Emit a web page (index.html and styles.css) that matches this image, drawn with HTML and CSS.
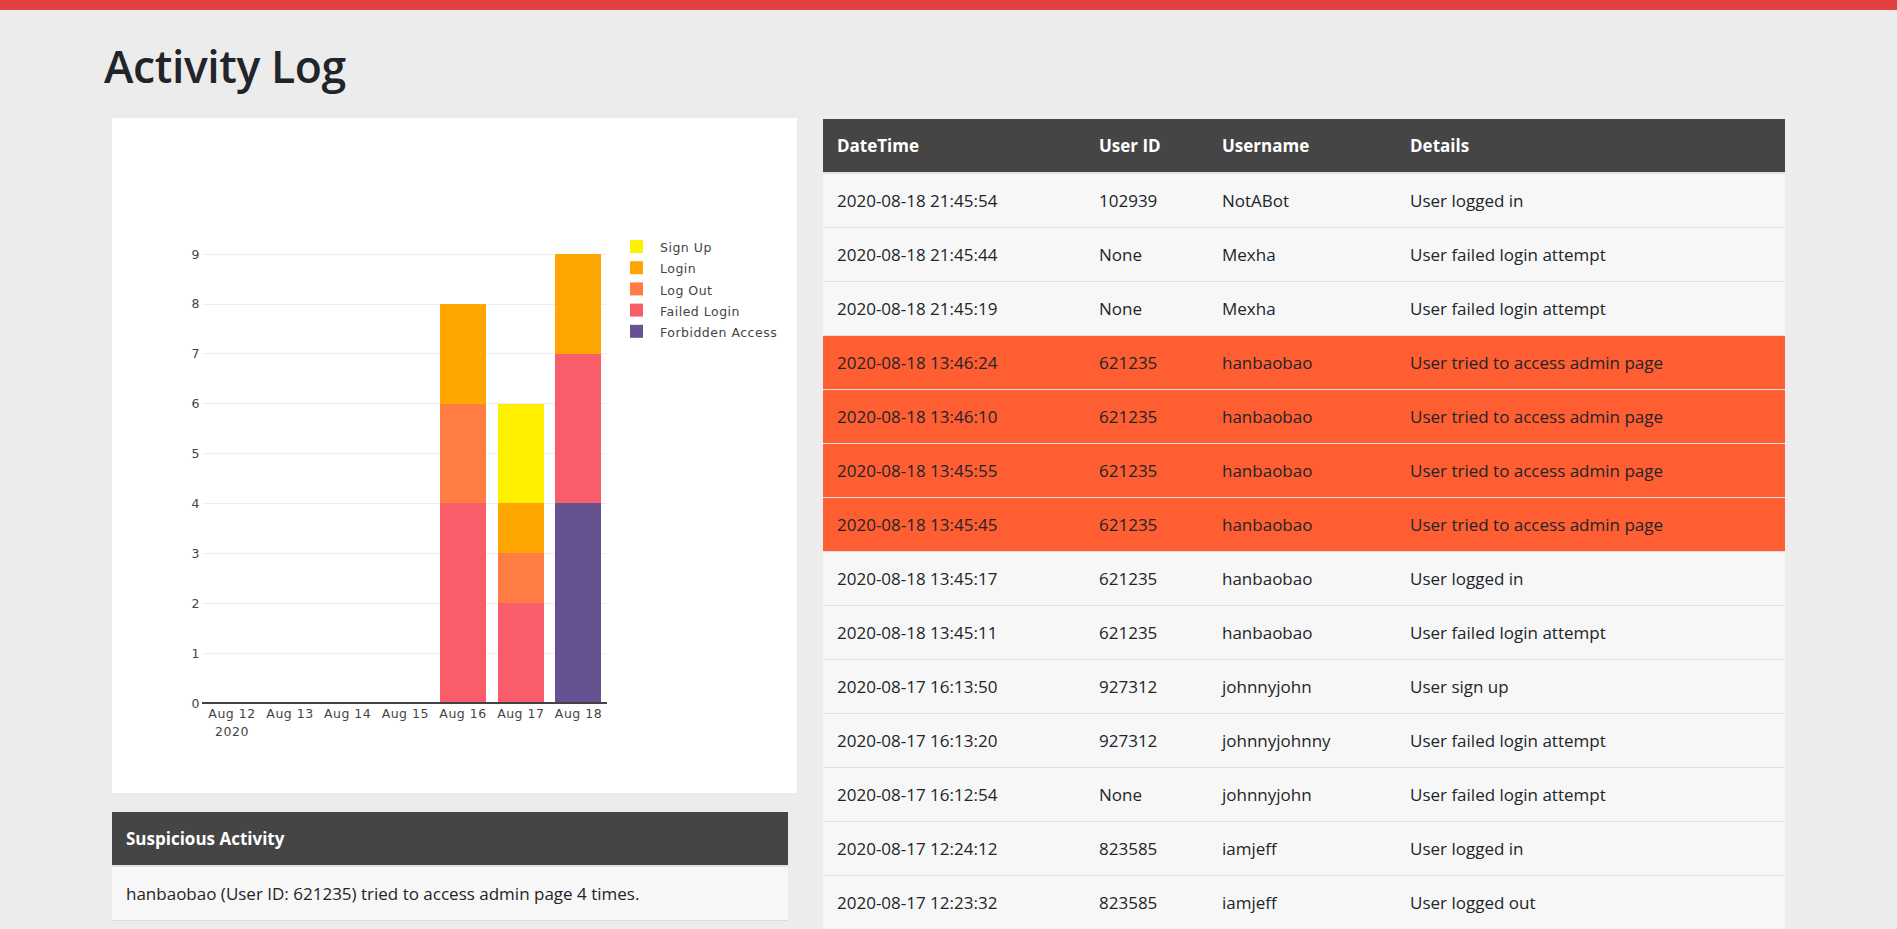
FILE: index.html
```html
<!DOCTYPE html>
<html lang="en">
<head>
<meta charset="utf-8">
<title>Activity Log</title>
<link rel="stylesheet" href="styles.css">
</head>
<body>
<div class="topbar"></div>
<main class="page">
  <h1 class="title">Activity Log</h1>
  <div class="content">
    <section class="left-col">
      <div class="chart-card">
        <svg class="chart" width="685" height="675" viewBox="0 0 685 675" xmlns="http://www.w3.org/2000/svg">
          <g class="grid" stroke="#eeeeee" stroke-width="1" shape-rendering="crispEdges">
            <line x1="91" x2="495" y1="535.5" y2="535.5"/>
            <line x1="91" x2="495" y1="485.5" y2="485.5"/>
            <line x1="91" x2="495" y1="435.5" y2="435.5"/>
            <line x1="91" x2="495" y1="385.5" y2="385.5"/>
            <line x1="91" x2="495" y1="335.5" y2="335.5"/>
            <line x1="91" x2="495" y1="285.5" y2="285.5"/>
            <line x1="91" x2="495" y1="235.5" y2="235.5"/>
            <line x1="91" x2="495" y1="186.5" y2="186.5"/>
            <line x1="91" x2="495" y1="136.5" y2="136.5"/>
          </g>
          <g class="bars" shape-rendering="crispEdges">
            <rect x="328" y="385.44" width="46" height="199.56" fill="#f95d6a"/>
            <rect x="328" y="285.67" width="46" height="99.77" fill="#ff7c43"/>
            <rect x="328" y="185.89" width="46" height="99.78" fill="#ffa600"/>
            <rect x="386" y="485.22" width="46" height="99.78" fill="#f95d6a"/>
            <rect x="386" y="435.33" width="46" height="49.89" fill="#ff7c43"/>
            <rect x="386" y="385.44" width="46" height="49.89" fill="#ffa600"/>
            <rect x="386" y="285.67" width="46" height="99.77" fill="#fff000"/>
            <rect x="443" y="385.44" width="46" height="199.56" fill="#665191"/>
            <rect x="443" y="235.78" width="46" height="149.66" fill="#f95d6a"/>
            <rect x="443" y="136" width="46" height="99.78" fill="#ffa600"/>
          </g>
          <line x1="90" x2="495" y1="585" y2="585" stroke="#444444" stroke-width="2"/>
          <g class="ticks" text-anchor="end">
            <text x="88" y="589.5">0</text>
            <text x="88" y="539.6">1</text>
            <text x="88" y="489.7">2</text>
            <text x="88" y="439.8">3</text>
            <text x="88" y="389.9">4</text>
            <text x="88" y="340.1">5</text>
            <text x="88" y="290.2">6</text>
            <text x="88" y="240.3">7</text>
            <text x="88" y="190.4">8</text>
            <text x="88" y="140.5">9</text>
          </g>
          <g class="ticks" text-anchor="middle">
            <text x="120" y="600">Aug 12</text>
            <text x="120" y="617.5">2020</text>
            <text x="178" y="600">Aug 13</text>
            <text x="235.6" y="600">Aug 14</text>
            <text x="293.3" y="600">Aug 15</text>
            <text x="351" y="600">Aug 16</text>
            <text x="408.8" y="600">Aug 17</text>
            <text x="466.5" y="600">Aug 18</text>
          </g>
          <g class="legend">
            <rect x="518" y="122" width="13" height="13" fill="#fff000"/>
            <text x="548" y="134.2">Sign Up</text>
            <rect x="518" y="143.2" width="13" height="13" fill="#ffa600"/>
            <text x="548" y="155.4">Login</text>
            <rect x="518" y="164.4" width="13" height="13" fill="#ff7c43"/>
            <text x="548" y="176.6">Log Out</text>
            <rect x="518" y="185.6" width="13" height="13" fill="#f95d6a"/>
            <text x="548" y="197.8">Failed Login</text>
            <rect x="518" y="206.8" width="13" height="13" fill="#665191"/>
            <text x="548" y="219">Forbidden Access</text>
          </g>
        </svg>
      </div>
      <table class="log-table suspicious">
        <thead>
          <tr><th>Suspicious Activity</th></tr>
        </thead>
        <tbody>
          <tr><td>hanbaobao (User ID: 621235) tried to access admin page 4 times.</td></tr>
        </tbody>
      </table>
    </section>
    <section class="right-col">
      <table class="log-table activity">
        <thead>
          <tr>
            <th class="c-date">DateTime</th>
            <th class="c-id">User ID</th>
            <th class="c-user">Username</th>
            <th class="c-details">Details</th>
          </tr>
        </thead>
        <tbody>
          <tr><td>2020-08-18 21:45:54</td><td>102939</td><td>NotABot</td><td>User logged in</td></tr>
          <tr><td>2020-08-18 21:45:44</td><td>None</td><td>Mexha</td><td>User failed login attempt</td></tr>
          <tr><td>2020-08-18 21:45:19</td><td>None</td><td>Mexha</td><td>User failed login attempt</td></tr>
          <tr class="flagged"><td>2020-08-18 13:46:24</td><td>621235</td><td>hanbaobao</td><td>User tried to access admin page</td></tr>
          <tr class="flagged"><td>2020-08-18 13:46:10</td><td>621235</td><td>hanbaobao</td><td>User tried to access admin page</td></tr>
          <tr class="flagged"><td>2020-08-18 13:45:55</td><td>621235</td><td>hanbaobao</td><td>User tried to access admin page</td></tr>
          <tr class="flagged"><td>2020-08-18 13:45:45</td><td>621235</td><td>hanbaobao</td><td>User tried to access admin page</td></tr>
          <tr><td>2020-08-18 13:45:17</td><td>621235</td><td>hanbaobao</td><td>User logged in</td></tr>
          <tr><td>2020-08-18 13:45:11</td><td>621235</td><td>hanbaobao</td><td>User failed login attempt</td></tr>
          <tr><td>2020-08-17 16:13:50</td><td>927312</td><td>johnnyjohn</td><td>User sign up</td></tr>
          <tr><td>2020-08-17 16:13:20</td><td>927312</td><td>johnnyjohnny</td><td>User failed login attempt</td></tr>
          <tr><td>2020-08-17 16:12:54</td><td>None</td><td>johnnyjohn</td><td>User failed login attempt</td></tr>
          <tr><td>2020-08-17 12:24:12</td><td>823585</td><td>iamjeff</td><td>User logged in</td></tr>
          <tr><td>2020-08-17 12:23:32</td><td>823585</td><td>iamjeff</td><td>User logged out</td></tr>
        </tbody>
      </table>
    </section>
  </div>
</main>
</body>
</html>
```

FILE: styles.css
```css
html, body {
  margin: 0;
  padding: 0;
}

body {
  background: #ececec;
  color: #212529;
  font-family: "Open Sans", "Noto Sans", "Liberation Sans", sans-serif;
  overflow: hidden;
}

.topbar {
  height: 10px;
  background: #e0403f;
}

.page {
  padding: 0 112px;
}

.title {
  margin: 28px 0 25px -8px;
  font-size: 44.5px;
  line-height: 55px;
  font-weight: 600;
  color: #212529;
  letter-spacing: -0.4px;
}

.content {
  display: grid;
  grid-template-columns: 685px 1fr;
  column-gap: 26px;
  align-items: start;
}

.chart-card {
  background: #ffffff;
  width: 685px;
  height: 675px;
}

.chart {
  display: block;
}

.chart text {
  font-family: "DejaVu Sans", Verdana, sans-serif;
  font-size: 12.5px;
  letter-spacing: 0.5px;
  fill: #444444;
}

.log-table {
  border-collapse: separate;
  border-spacing: 0;
  font-size: 17px;
  color: #212529;
}

.log-table th,
.log-table td {
  text-align: left;
  padding: 13px 14px;
  line-height: 27px;
  white-space: nowrap;
}

.log-table th {
  background: #454545;
  color: #ffffff;
  font-weight: 700;
  border-bottom: 2px solid #dee2e6;
}

.log-table td {
  background: #f7f7f7;
  border-top: 1px solid #dee2e6;
}

.log-table tbody tr:first-child td {
  border-top: none;
}

.log-table tr.flagged td {
  background: #ff5e33;
}

.suspicious {
  width: 676px;
  margin-top: 19px;
  border-bottom: 1px solid #dcdcdc;
}

.activity {
  width: 100%;
  margin-top: 1px;
}

.c-date { width: 234px; }
.c-id { width: 95px; }
.c-user { width: 160px; }
```
